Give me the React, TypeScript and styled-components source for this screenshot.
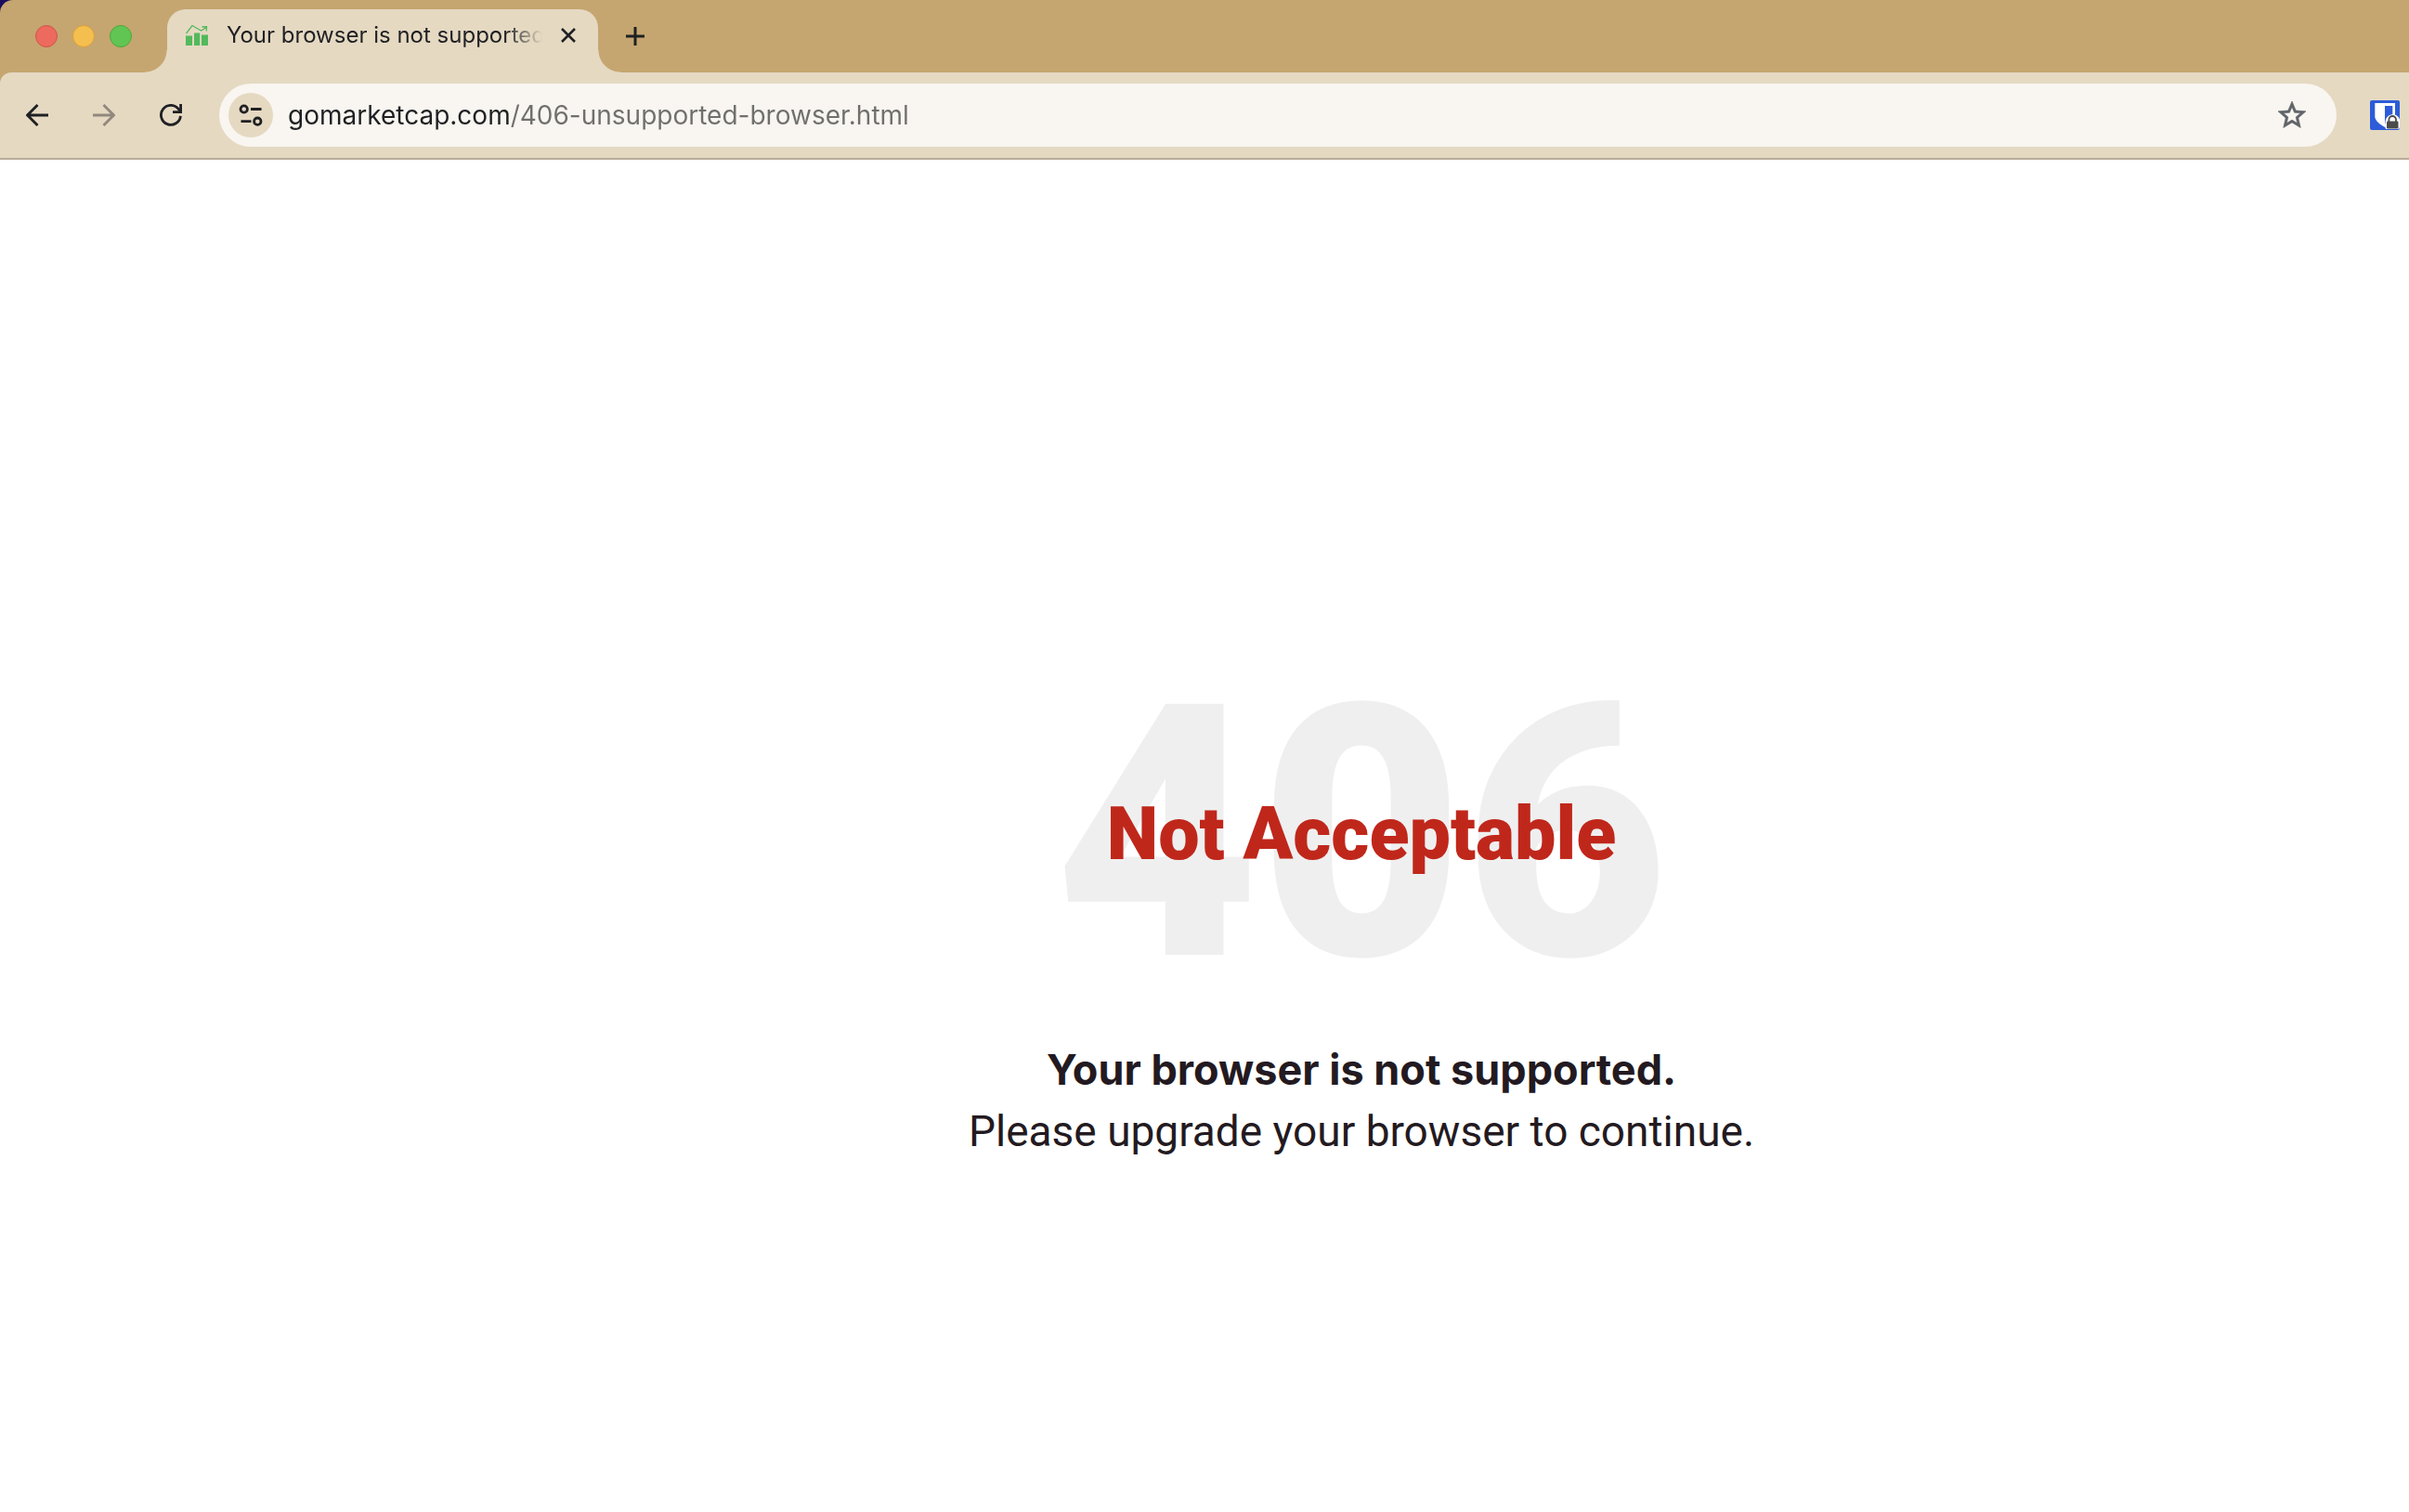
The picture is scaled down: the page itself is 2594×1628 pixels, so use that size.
import React from "react";
import styled, { createGlobalStyle } from "styled-components";

const color = {
  strip: "#c5a670",
  bar: "#e5d9c2",
  field: "#f9f5f0",
  ink: "#1f2023",
  muted: "#6f6f6d",
  rule: "#b9ac9a",
  green: "#52b95c",
  red: "#c0271b",
  text: "#231a21",
};

const GlobalStyle = createGlobalStyle`
  *, *::before, *::after { box-sizing: border-box; }
  html, body, #root { height: 100%; }
  body {
    margin: 0;
    background: #1b0a5e;
    font-family: Inter, "Liberation Sans", sans-serif;
    color: ${color.text};
    overflow: hidden;
  }
`;

const Window = styled.div`
  display: flex;
  flex-direction: column;
  height: 100%;
  background: ${color.strip};
  border-top-left-radius: 14px;
  overflow: hidden;
`;

const TabStrip = styled.header`
  display: flex;
  align-items: flex-end;
  height: 78px;
  flex: none;
`;

const WindowControls = styled.div`
  display: flex;
  gap: 16px;
  align-self: center;
  width: 180px;
  padding-left: 38px;
`;

const ControlDot = styled.button<{ $fill: string; $edge: string }>`
  width: 24px;
  height: 24px;
  padding: 0;
  border: 1px solid ${(p) => p.$edge};
  border-radius: 50%;
  background: ${(p) => p.$fill};
`;

const Tab = styled.div`
  position: relative;
  display: flex;
  align-items: center;
  width: 464px;
  height: 68px;
  padding: 0 16px 12px 20px;
  background: ${color.bar};
  border-radius: 20px 20px 0 0;

  &::before,
  &::after {
    content: "";
    position: absolute;
    bottom: 0;
    width: 24px;
    height: 24px;
  }
  &::before {
    right: 100%;
    background: radial-gradient(circle at 0 0, transparent 23px, ${color.bar} 24px);
  }
  &::after {
    left: 100%;
    background: radial-gradient(circle at 100% 0, transparent 23px, ${color.bar} 24px);
  }
`;

const TabTitle = styled.span`
  flex: 1;
  margin: 0 12px 0 20px;
  overflow: hidden;
  white-space: nowrap;
  font-size: 24px;
  line-height: 32px;
  color: ${color.ink};
  mask-image: linear-gradient(to right, #000 calc(100% - 40px), transparent);
`;

const IconButton = styled.button<{ $size: number; $faded?: boolean }>`
  display: grid;
  place-items: center;
  flex: none;
  width: ${(p) => p.$size}px;
  height: ${(p) => p.$size}px;
  padding: 0;
  border: 0;
  border-radius: 50%;
  background: transparent;
  color: ${(p) => (p.$faded ? "#91897d" : color.ink)};
`;

const NewTab = styled(IconButton)`
  align-self: center;
  margin-left: 16px;
`;

const Toolbar = styled.nav`
  display: flex;
  align-items: center;
  gap: 8px;
  flex: none;
  height: 94px;
  padding: 0 10px 0 8px;
  background: ${color.bar};
  border-bottom: 2px solid ${color.rule};
  border-top-left-radius: 12px;
`;

const AddressBar = styled.form`
  display: flex;
  align-items: center;
  flex: 1;
  height: 68px;
  margin: 0 28px 0 12px;
  padding: 0 24px 0 10px;
  border-radius: 34px;
  background: ${color.field};
`;

const SiteInfo = styled(IconButton)`
  background: ${color.bar};
`;

/* The host is drawn dark and the path after it grey, inside one text field. */
const AddressInput = styled.input`
  flex: 1;
  min-width: 0;
  height: 48px;
  margin: 0 16px;
  padding: 0;
  border: 0;
  outline: 0;
  font: 400 28px/36px Inter, "Liberation Sans", sans-serif;
  color: ${color.ink};
  background: linear-gradient(to right, ${color.ink} 238px, ${color.muted} 238px);
  background-clip: text;
  -webkit-text-fill-color: transparent;
`;

const Page = styled.main`
  display: flex;
  flex: 1;
  flex-direction: column;
  align-items: center;
  justify-content: center;
  padding: 164px 0 0 338px;
  background: #fff;
  text-align: center;
`;

const Hero = styled.div`
  display: grid;
  place-items: center;
  margin-bottom: 34px;
  font-family: Roboto, Inter, sans-serif;
  font-weight: 900;

  & > * {
    grid-area: 1 / 1;
    margin: 0;
  }
`;

const Code = styled.p`
  font-size: 380px;
  line-height: 372px;
  color: #efefef;
`;

const Title = styled.h1`
  font-size: 79px;
  font-weight: inherit;
  line-height: 80px;
  color: ${color.red};
`;

const Message = styled.p`
  margin: 0;
  font: 400 46px/67px Roboto, Inter, sans-serif;
`;

const Lead = styled.strong`
  display: block;
  font: 700 45px/67px Inter, sans-serif;
`;

const ChartIcon = () => (
  <svg width="24" height="24" viewBox="0 0 24 24" fill={color.green} aria-hidden="true">
    <path d="M0 12.5h7V23H0zM9 9.500h6.200V23H9zM17 11.500h7V23h-7z" />
    <path d="M.5 10 7 1.500l9.500 5.500 6-3.500M17.500 3l5-.2-.2 4.700" fill="none" stroke={color.green} strokeWidth="1.300" />
  </svg>
);

const CloseIcon = () => (
  <svg width="16" height="16" viewBox="0 0 16 16" stroke="currentColor" strokeWidth="2.600" aria-hidden="true">
    <path d="m1 1 14 14M15 1 1 15" />
  </svg>
);

const PlusIcon = () => (
  <svg width="20" height="20" viewBox="0 0 20 20" stroke="currentColor" strokeWidth="3" aria-hidden="true">
    <path d="M10 0v20M0 10h20" />
  </svg>
);

const ArrowIcon = ({ forward = false }: { forward?: boolean }) => (
  <svg width="24" height="24" viewBox="0 0 24 24" fill="none" stroke="currentColor" strokeWidth="2.900" aria-hidden="true">
    <path d={forward ? "M0 12h22M11.500 1 22.500 12l-11 11" : "M24 12H2M12.500 1 1.500 12l11 11"} />
  </svg>
);

const ReloadIcon = () => (
  <svg width="24" height="24" viewBox="0 0 24 24" fill="none" stroke="currentColor" strokeWidth="2.800" aria-hidden="true">
    <path d="M22.400 12.800A10.500 10.500 0 1 1 20.500 5.800L22 8" />
    <path d="M22.600 0v8.600H14" />
  </svg>
);

const TuneIcon = () => (
  <svg width="26" height="24" viewBox="0 0 26 24" fill="none" stroke="currentColor" strokeWidth="2.800" aria-hidden="true">
    <circle cx="5.700" cy="5.500" r="3.700" />
    <path d="M13 5.500h11.500M2.500 18.700H13.500" />
    <circle cx="20.300" cy="18.700" r="3.700" />
  </svg>
);

const StarIcon = () => (
  <svg width="36" height="36" viewBox="0 0 24 24" fill="#5f6368" stroke="#5f6368" strokeWidth=".4" aria-hidden="true">
    <path d="m22 9.240-7.190-.62L12 2 9.190 8.630 2 9.240l5.460 4.730L5.820 21 12 17.270 18.180 21l-1.630-7.030L22 9.240zM12 15.400l-3.760 2.270 1-4.280-3.320-2.880 4.380-.38L12 6.100l1.710 4.040 4.380.38-3.320 2.880 1 4.280L12 15.400z" />
  </svg>
);

const VaultIcon = () => (
  <svg width="32" height="32" viewBox="0 0 32 32" aria-hidden="true">
    <rect width="32" height="32" rx="2" fill="#2c5cd8" />
    <path d="M5.300 3h21.700v14.500c0 5-6 9-10.800 11.500C11.300 26.500 5.300 22 5.300 17.500z" fill="#fff" />
    <path d="M16 6h8.300v10c0 4-4 7-8.300 9.500z" fill="#2c5cd8" />
    <path d="M16.500 23a8 8 0 0 1 15.500-2.500V29a2 2 0 0 1-2 2H18a1.500 1.500 0 0 1-1.500-1.500z" fill="#fff" />
    <rect x="18" y="22.500" width="12.500" height="8" rx="1" fill="#4b4b4b" />
    <path d="M20.400 23v-2.200a3.800 3.800 0 0 1 7.600 0V23" fill="none" stroke="#4b4b4b" strokeWidth="1.800" />
  </svg>
);

export default function App() {
  return (
    <>
      <GlobalStyle />
      <Window>
        <TabStrip>
          <WindowControls>
            <ControlDot $fill="#ec6a5e" $edge="#d3544a" aria-label="Close window" />
            <ControlDot $fill="#f5bf4f" $edge="#d8a03c" aria-label="Minimize window" />
            <ControlDot $fill="#61c554" $edge="#4ea73c" aria-label="Zoom window" />
          </WindowControls>
          <Tab>
            <ChartIcon />
            <TabTitle>Your browser is not supported</TabTitle>
            <IconButton $size={32} aria-label="Close tab">
              <CloseIcon />
            </IconButton>
          </Tab>
          <NewTab $size={48} aria-label="New tab">
            <PlusIcon />
          </NewTab>
        </TabStrip>
        <Toolbar>
          <IconButton $size={64} aria-label="Back">
            <ArrowIcon />
          </IconButton>
          <IconButton $size={64} $faded aria-label="Forward">
            <ArrowIcon forward />
          </IconButton>
          <IconButton $size={64} aria-label="Reload">
            <ReloadIcon />
          </IconButton>
          <AddressBar onSubmit={(e) => e.preventDefault()}>
            <SiteInfo $size={48} type="button" aria-label="View site information">
              <TuneIcon />
            </SiteInfo>
            <AddressInput
              type="text"
              aria-label="Address"
              spellCheck={false}
              defaultValue="gomarketcap.com/406-unsupported-browser.html"
            />
            <IconButton $size={48} type="button" aria-label="Bookmark this page">
              <StarIcon />
            </IconButton>
          </AddressBar>
          <IconButton $size={32} aria-label="Password manager">
            <VaultIcon />
          </IconButton>
        </Toolbar>
        <Page>
          <Hero>
            <Code>406</Code>
            <Title>Not Acceptable</Title>
          </Hero>
          <Message>
            <Lead>Your browser is not supported.</Lead>
            Please upgrade your browser to continue.
          </Message>
        </Page>
      </Window>
    </>
  );
}
